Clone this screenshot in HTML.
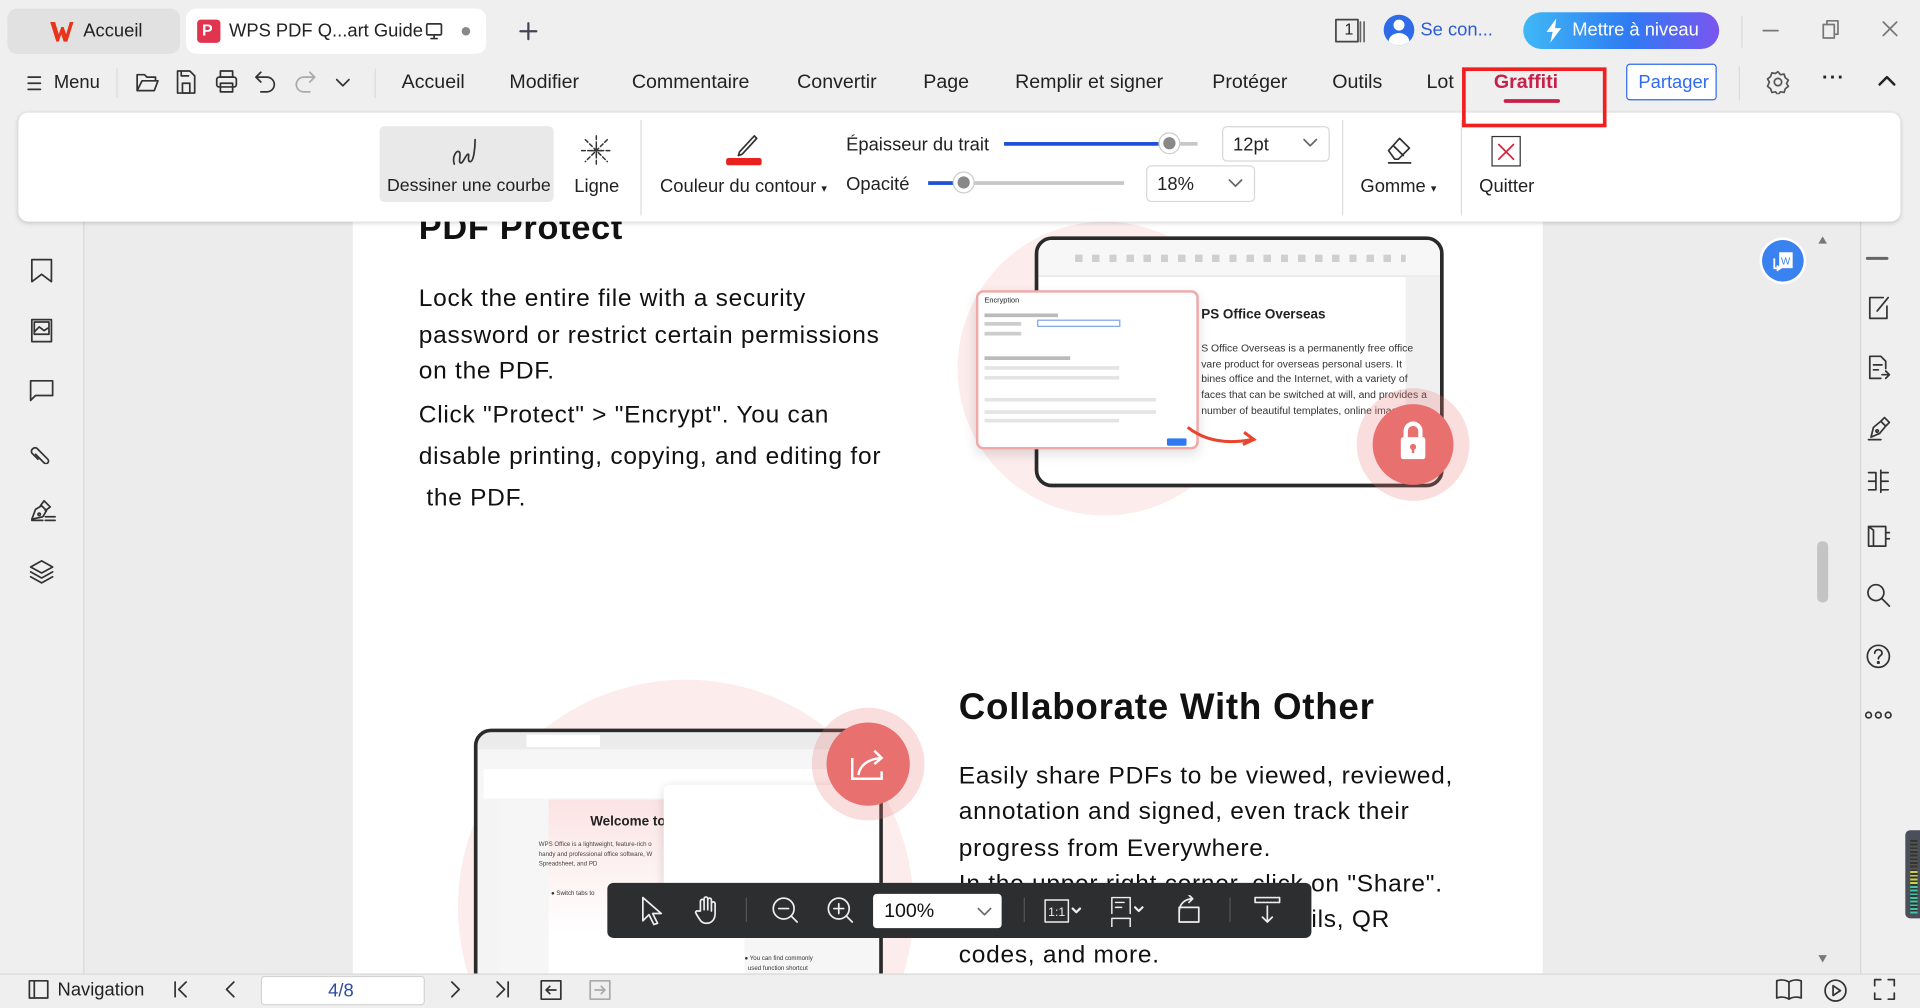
<!DOCTYPE html>
<html><head><meta charset="utf-8">
<style>
*{box-sizing:border-box;margin:0;padding:0}
html,body{width:1920px;height:1008px;overflow:hidden;background:#efefef}
#s{position:absolute;left:0;top:0;width:1568px;height:823px;transform:scale(1.22449);transform-origin:0 0;background:#efefef;font-family:"Liberation Sans",sans-serif;color:#222;overflow:hidden}
.a{position:absolute}
.t{position:absolute;font-size:15px;white-space:nowrap;line-height:1}
svg.i{position:absolute;fill:none;stroke:#333;stroke-width:1.4;stroke-linecap:round;stroke-linejoin:round}
.doc{font-family:"Liberation Sans",sans-serif;color:#111;font-size:20px;white-space:nowrap;position:absolute;letter-spacing:0.6px}
.vd{position:absolute;width:1px;background:#dcdcdc}
</style></head><body><div id="s">

<!-- title bar -->
<div class="a" style="left:6px;top:7px;width:141px;height:37px;background:#e1e1e1;border-radius:8px"></div>
<svg class="i" style="left:40px;top:17px;stroke:none" width="20" height="18" viewBox="0 0 20 18"><path d="M1 1h4l3 10 2-6h2l2 6 3-10h3l-5 16h-3l-2-6-2 6H6z" fill="#e8341c"/></svg>
<div class="t" style="left:68px;top:18px">Accueil</div>
<div class="a" style="left:152px;top:7px;width:245px;height:37px;background:#fff;border-radius:8px"></div>
<div class="a" style="left:161px;top:16px;width:19px;height:19px;background:#e0344f;border-radius:3px"></div>
<div class="t" style="left:165px;top:18px;color:#fff;font-size:13px;font-weight:bold">P</div>
<div class="t" style="left:187px;top:18px">WPS PDF Q...art Guide</div>
<svg class="i" style="left:347px;top:18px" width="15" height="15" viewBox="0 0 15 15"><rect x="1.5" y="1.5" width="12" height="9" rx="1"/><path d="M7.5 10.5v3M5 13.5h5"/></svg>
<div class="a" style="left:377px;top:22px;width:7px;height:7px;border-radius:50%;background:#888"></div>
<svg class="i" style="left:423px;top:17px;stroke:#445;stroke-width:1.8" width="17" height="17"><path d="M8.5 2v13M2 8.5h13"/></svg>

<svg class="i" style="left:1090px;top:15px" width="26" height="20"><rect x="1" y="1" width="18" height="18" stroke="#444"/><path d="M21 3v16M24 3v16" stroke="#666"/></svg>
<div class="t" style="left:1098px;top:17px;font-size:13px">1</div>
<div class="a" style="left:1130px;top:12px;width:25px;height:25px;border-radius:50%;background:#2f6be8;overflow:hidden"><div class="a" style="left:8px;top:4px;width:9px;height:9px;border-radius:50%;background:#fff"></div><div class="a" style="left:4px;top:15px;width:17px;height:14px;border-radius:50%;background:#fff"></div></div>
<div class="t" style="left:1160px;top:17px;color:#2a5bd7">Se con...</div>
<div class="a" style="left:1244px;top:10px;width:160px;height:30px;border-radius:15px;background:linear-gradient(90deg,#3fb8f6,#2f7af2 55%,#7b55f0)"></div>
<svg class="a" style="left:1262px;top:15px" width="14" height="20"><path d="M9 0L1 11h5l-2 9 9-12H8z" fill="#fff"/></svg>
<div class="t" style="left:1284px;top:17px;color:#fff">Mettre à niveau</div>
<div class="vd" style="left:1422px;top:13px;height:26px"></div>
<svg class="i" style="left:1438px;top:16px;stroke:#777" width="16" height="16"><path d="M2 9h12"/></svg>
<svg class="i" style="left:1487px;top:16px;stroke:#777" width="16" height="16"><rect x="2" y="4" width="9" height="11"/><path d="M5 4V1h9v11h-3"/></svg>
<svg class="i" style="left:1536px;top:16px;stroke:#777" width="15" height="15"><path d="M2 2l11 11M13 2L2 13"/></svg>

<!-- menu row -->
<svg class="i" style="left:22px;top:61px" width="12" height="14"><path d="M1 2h10M1 7h10M1 12h10"/></svg>
<div class="t" style="left:44px;top:60px">Menu</div>
<div class="vd" style="left:95px;top:56px;height:24px"></div>
<svg class="i" style="left:110px;top:58px" width="20" height="18"><path d="M2 3h6l2 2h7v3M2 3v13h14l3-8H6l-4 8"/></svg>
<svg class="i" style="left:143px;top:57px" width="18" height="20"><path d="M2 1h10l4 4v14H2z"/><rect x="6" y="11" width="6" height="8"/><path d="M5 1v4h6"/></svg>
<svg class="i" style="left:175px;top:57px" width="20" height="20"><rect x="5" y="1" width="10" height="5"/><rect x="2" y="6" width="16" height="8" rx="2"/><rect x="5" y="11" width="10" height="7"/></svg>
<svg class="i" style="left:207px;top:57px" width="20" height="20"><path d="M6 2L2 6l4 4M2 6h9a6 6 0 010 12H6"/></svg>
<svg class="i" style="left:239px;top:57px;stroke:#aaa" width="20" height="20"><path d="M14 2l4 4-4 4M18 6H9a6 6 0 000 12h5"/></svg>
<svg class="i" style="left:273px;top:63px" width="14" height="10"><path d="M2 2l5 5 5-5"/></svg>
<div class="vd" style="left:306px;top:56px;height:24px"></div>
<div class="t" style="left:328px;top:60px;font-size:16px">Accueil</div>
<div class="t" style="left:416px;top:60px;font-size:16px">Modifier</div>
<div class="t" style="left:516px;top:60px;font-size:16px">Commentaire</div>
<div class="t" style="left:651px;top:60px;font-size:16px">Convertir</div>
<div class="t" style="left:754px;top:60px;font-size:16px">Page</div>
<div class="t" style="left:829px;top:60px;font-size:16px">Remplir et signer</div>
<div class="t" style="left:990px;top:60px;font-size:16px">Protéger</div>
<div class="t" style="left:1088px;top:60px;font-size:16px">Outils</div>
<div class="t" style="left:1165px;top:60px;font-size:16px">Lot</div>
<div class="t" style="left:1220px;top:60px;font-size:16px;font-weight:bold;color:#c72049">Graffiti</div>
<div class="a" style="left:1228px;top:81px;width:46px;height:3px;background:#c72049;border-radius:2px"></div>
<div class="a" style="left:1328px;top:52px;width:74px;height:30px;border:1px solid #2f6bf0;border-radius:3px;background:#fff"></div>
<div class="t" style="left:1338px;top:60px;color:#2f6bf0">Partager</div>
<div class="vd" style="left:1420px;top:54px;height:28px"></div>
<svg class="i" style="left:1442px;top:57px;stroke:#555" width="20" height="20"><circle cx="10" cy="10" r="3"/><path d="M10 1.5l2 2.5 3-.5 1 3 2.5 2-1.5 2.5 1.5 2.5-2.5 2-1 3-3-.5-2 2.5-2-2.5-3 .5-1-3-2.5-2L3 10 1.5 7.5 4 5.5l1-3 3 .5z"/></svg>
<div class="t" style="left:1488px;top:56px;font-size:16px;font-weight:bold;letter-spacing:1px">···</div>
<svg class="i" style="left:1533px;top:60px;stroke:#222;stroke-width:2" width="16" height="12"><path d="M2 9l6-6 6 6"/></svg>

<div class="a" style="left:1194px;top:55px;width:118px;height:49px;border:3px solid #f02020;z-index:5"></div>

<!-- main area -->
<div class="a" style="left:0;top:181px;width:69px;height:614px;border-right:1px solid #d6d6d6"></div>
<svg class="i" style="left:24px;top:210px" width="20" height="22"><path d="M2 2h16v18l-8-6-8 6z"/></svg>
<svg class="i" style="left:24px;top:259px" width="20" height="22"><rect x="2" y="2" width="16" height="18"/><rect x="4" y="4" width="12" height="10"/><path d="M4 12l4-4 4 3 3-2"/></svg>
<svg class="i" style="left:23px;top:309px" width="22" height="20"><path d="M2 2h18v12H6l-4 4z"/></svg>
<svg class="i" style="left:23px;top:357px" width="22" height="22"><path d="M8 18l-5-5a3 3 0 014-4l9 9a2 2 0 01-3 3L6 14"/></svg>
<svg class="i" style="left:23px;top:406px" width="24" height="22"><path d="M3 18l3-8 5-3 4 4-3 5zM10 7l3-4 5 5-4 3"/><circle cx="9" cy="14" r="1"/><path d="M14 16h8M14 19h8M3 19h9"/></svg>
<svg class="i" style="left:23px;top:456px" width="22" height="22"><path d="M11 2l9 5-9 5-9-5zM2 11l9 5 9-5M2 15l9 5 9-5"/></svg>

<!-- page -->
<div class="a" style="left:288px;top:181px;width:972px;height:614px;background:#fff;overflow:hidden">
 <!-- image 2 (clipped) -->
 <div class="a" style="left:86px;top:374px;width:372px;height:372px;border-radius:50%;background:#fcecec"></div>
 <div class="a" style="left:99px;top:414px;width:334px;height:230px;border:3px solid #2a2a2a;border-radius:14px;background:#f6f6f6;overflow:hidden">
  <div class="a" style="left:0;top:0;width:330px;height:14px;background:#ebebeb"></div>
  <div class="a" style="left:40px;top:2px;width:60px;height:10px;background:#fff"></div>
  <div class="a" style="left:5px;top:30px;width:320px;height:24px;background:#fff"></div>
  <div class="a" style="left:0;top:55px;width:18px;height:180px;background:#f4f4f4"></div>
  <div class="a" style="left:58px;top:55px;width:160px;height:180px;background:linear-gradient(180deg,#fbe3e3,#fff 60%)"></div>
  <div class="t" style="left:92px;top:68px;font-size:11px;font-weight:bold">Welcome to</div>
  <div class="t" style="left:50px;top:88px;font-size:5px;line-height:8px;color:#444">WPS Office is a lightweight, feature-rich o<br>handy and professional office software, W<br>Spreadsheet, and PD</div>
  <div class="a" style="left:152px;top:43px;width:180px;height:100px;background:#fff;box-shadow:0 2px 8px rgba(0,0,0,.15);border-radius:4px"></div>
  <div class="t" style="left:218px;top:181px;font-size:5px;line-height:8px;color:#333">● You can find commonly<br>&nbsp;&nbsp;used function shortcut</div>
  <div class="t" style="left:60px;top:130px;font-size:5px;color:#333">● Switch tabs to</div>
 </div>
 <div class="a" style="left:375px;top:397px;width:92px;height:92px;border-radius:50%;background:rgba(235,120,120,.25)"></div>
 <div class="a" style="left:387px;top:409px;width:68px;height:68px;border-radius:50%;background:#e8706f"></div>
 <svg class="a" style="left:405px;top:428px" width="32" height="30"><path d="M3 10v17h24v-6M8 24q2-12 18-14M21 4l6 6-6 5" fill="none" stroke="#fff" stroke-width="2"/></svg>
</div>
<div class="a" style="left:70px;top:181px;width:218px;height:614px;background:#ececec"></div>
<div class="a" style="left:1260px;top:181px;width:259px;height:614px;background:#ececec"></div>
<div class="a" style="left:1519px;top:181px;width:1px;height:614px;background:#d6d6d6"></div>

<div class="doc" style="left:342px;top:170px;font-size:28px;font-weight:bold">PDF Protect</div>
<div class="doc" style="left:342px;top:230px;line-height:29.5px">Lock the entire file with a security<br>password or restrict certain permissions<br>on the PDF.</div>
<div class="doc" style="left:342px;top:322px;line-height:34px">Click "Protect" &gt; "Encrypt". You can<br>disable printing, copying, and editing for<br>&nbsp;the PDF.</div>

<!-- image 1 -->
<div class="a" style="left:782px;top:181px;width:240px;height:240px;border-radius:50%;background:#fcecec"></div>
<div class="a" style="left:845px;top:193px;width:334px;height:205px;border:3px solid #2a2a2a;border-radius:14px;background:#fff;overflow:hidden">
 <div class="a" style="left:0;top:0;width:330px;height:30px;background:#f7f7f7;border-bottom:1px solid #e4e4e4"></div>
 <div class="a" style="left:30px;top:12px;width:270px;height:6px;background:repeating-linear-gradient(90deg,#cfcfcf 0 6px,transparent 6px 14px)"></div>
 <div class="a" style="left:300px;top:30px;width:30px;height:170px;background:#f0f0f0"></div>
 <div class="t" style="left:133px;top:56px;font-size:11px;font-weight:bold">PS Office Overseas</div>
 <div class="t" style="left:133px;top:82px;font-size:8.5px;line-height:12.7px;color:#333">S Office Overseas is a permanently free office<br>vare product for overseas personal users. It<br>bines office and the Internet, with a variety of<br>faces that can be switched at will, and provides a<br>number of beautiful templates, online image</div>
</div>
<div class="a" style="left:797px;top:237px;width:182px;height:130px;border:2px solid #f0a8a8;border-radius:6px;background:#fff;box-shadow:0 4px 10px rgba(0,0,0,.12)">
 <div class="t" style="left:5px;top:4px;font-size:6px">Encryption</div>
 <div class="a" style="left:48px;top:22px;width:68px;height:6px;border:1px solid #7aa4ee"></div>
 <div class="a" style="left:5px;top:17px;width:60px;height:3px;background:#bbb"></div>
 <div class="a" style="left:5px;top:24px;width:30px;height:3px;background:#ccc"></div>
 <div class="a" style="left:5px;top:32px;width:30px;height:3px;background:#ccc"></div>
 <div class="a" style="left:5px;top:52px;width:70px;height:3px;background:#bbb"></div>
 <div class="a" style="left:5px;top:60px;width:110px;height:3px;background:#e4e4e4"></div>
 <div class="a" style="left:5px;top:68px;width:110px;height:3px;background:#e4e4e4"></div>
 <div class="a" style="left:5px;top:86px;width:140px;height:3px;background:#e4e4e4"></div>
 <div class="a" style="left:5px;top:96px;width:140px;height:3px;background:#e4e4e4"></div>
 <div class="a" style="left:5px;top:103px;width:110px;height:3px;background:#e4e4e4"></div>
 <div class="a" style="left:154px;top:119px;width:16px;height:6px;background:#2f7af2;border-radius:1px"></div>
</div>
<svg class="a" style="left:968px;top:345px" width="62" height="22"><path d="M2 4q20 16 52 10" fill="none" stroke="#e8452c" stroke-width="2.5"/><path d="M48 8l8 6-9 4" fill="none" stroke="#e8452c" stroke-width="2.5"/></svg>
<div class="a" style="left:1108px;top:317px;width:92px;height:92px;border-radius:50%;background:rgba(235,120,120,.25)"></div>
<div class="a" style="left:1121px;top:330px;width:66px;height:66px;border-radius:50%;background:#e8706f"></div>
<svg class="a" style="left:1140px;top:343px" width="28" height="34"><path d="M8 14V9a6 6 0 0112 0v5" fill="none" stroke="#fff" stroke-width="3.5"/><rect x="4" y="14" width="20" height="18" rx="2" fill="#fff"/><circle cx="14" cy="22" r="2.5" fill="#e8706f"/><rect x="13" y="22" width="2" height="5" fill="#e8706f"/></svg>

<div class="doc" style="left:783px;top:561px;font-size:30px;font-weight:bold">Collaborate With Other</div>
<div class="doc" style="left:783px;top:620px;line-height:29.3px">Easily share PDFs to be viewed, reviewed,<br>annotation and signed, even track their<br>progress from Everywhere.<br>In the upper right corner, click on "Share".<br>You can share it via links, emails, QR<br>codes, and more.</div>

<!-- right panel -->
<div class="a" style="left:1439px;top:196px;width:34px;height:34px;border-radius:50%;background:#3a82ef;box-shadow:0 0 0 2px #fff"></div>
<svg class="a" style="left:1446px;top:204px" width="20" height="18"><rect x="7" y="2" width="11" height="13" fill="#fff"/><path d="M3 7v8h5M5 13l3 2-3 2" fill="none" stroke="#fff" stroke-width="1.5"/><text x="8.5" y="12" font-size="8" fill="#3a82ef" font-family="Liberation Sans">W</text></svg>
<svg class="a" style="left:1484px;top:192px" width="9" height="8"><path d="M4.5 1L8 7H1z" fill="#777"/></svg>
<div class="a" style="left:1484px;top:442px;width:9px;height:50px;border-radius:4px;background:#c4c4c4"></div>
<svg class="a" style="left:1484px;top:779px" width="9" height="8"><path d="M4.5 7L8 1H1z" fill="#777"/></svg>

<svg class="i" style="left:1523px;top:203px;stroke:#666;stroke-width:2.5" width="20" height="16"><path d="M2 8h16"/></svg>
<svg class="i" style="left:1524px;top:240px" width="20" height="22"><path d="M14 3H3v17h14V10M9 14l9-11"/></svg>
<svg class="i" style="left:1524px;top:289px" width="20" height="22"><path d="M3 2h9l4 4v6M3 2v18h9M6 9h7M6 13h4M13 17h6M16 14l3 3-3 3"/></svg>
<svg class="i" style="left:1524px;top:339px" width="20" height="22"><path d="M4 18l2-8 6-5 4 4-5 6zM12 5l3-3 4 4-3 3"/><circle cx="9" cy="13" r="1"/><path d="M2 20h10"/></svg>
<svg class="i" style="left:1523px;top:382px" width="22" height="22"><path d="M3 4h6M3 11h6M3 18h6M9 4v14M13 2v18M13 4h6M13 11h6M13 18h6"/></svg>
<svg class="i" style="left:1523px;top:427px" width="22" height="22"><path d="M3 3h14v16H3zM3 3l4 3v13M17 8h3M17 13h3"/></svg>
<svg class="i" style="left:1523px;top:475px" width="22" height="22"><circle cx="9" cy="9" r="6.5"/><path d="M14 14l6 6"/></svg>
<svg class="i" style="left:1523px;top:525px" width="22" height="22"><circle cx="11" cy="11" r="9"/><path d="M8 8.5a3 3 0 116 0c0 2-3 2-3 4.5"/><circle cx="11" cy="16" r=".6" fill="#333"/></svg>
<svg class="i" style="left:1522px;top:578px" width="24" height="12"><circle cx="4" cy="6" r="2.3"/><circle cx="12" cy="6" r="2.3"/><circle cx="20" cy="6" r="2.3"/></svg>
<div class="a" style="left:1556px;top:678px;width:12px;height:72px;border-radius:4px 0 0 4px;background:#4a4f5a"><div class="a" style="left:4px;top:8px;width:6px;height:60px;background:repeating-linear-gradient(180deg,#333 0 1.5px,transparent 1.5px 3px),linear-gradient(180deg,#555 0 40%,#c9d24a 40% 60%,#3fc7a8 60%)"></div></div>

<!-- ribbon -->
<div class="a" style="left:15px;top:92px;width:1537px;height:89px;background:#fff;border-radius:8px;box-shadow:0 1px 4px rgba(0,0,0,.18)"></div>
<div class="a" style="left:310px;top:103px;width:142px;height:62px;background:#e9e9e9;border-radius:4px"></div>
<svg class="i" style="left:367px;top:110px" width="28" height="28"><path d="M4 24c-2-6 2-12 4-10s-1 8 1 9 4-6 6-7-1 6 2 6 4-12 4-18"/></svg>
<div class="t" style="left:316px;top:145px;font-size:14.5px">Dessiner une courbe</div>
<svg class="i" style="left:474px;top:110px;stroke-width:1.2" width="26" height="26"><path d="M13 1v24M1 13h24M4 4l18 18M22 4L4 22" stroke-dasharray="3 2"/><path d="M9 13h8M13 9v8"/></svg>
<div class="t" style="left:469px;top:145px">Ligne</div>
<div class="vd" style="left:523px;top:98px;height:78px"></div>
<svg class="i" style="left:597px;top:108px" width="24" height="24"><path d="M19 3l2 2-12 13-3 1 1-3z"/></svg>
<div class="a" style="left:593px;top:129px;width:29px;height:6px;background:#e8201e;border-radius:2px"></div>
<div class="t" style="left:539px;top:145px">Couleur du contour <span style="font-size:9px">▾</span></div>
<div class="t" style="left:691px;top:111px">Épaisseur du trait</div>
<div class="a" style="left:820px;top:116px;width:158px;height:3px;background:#c6c6c6"></div>
<div class="a" style="left:820px;top:116px;width:135px;height:3px;background:#1e4fd8"></div>
<div class="a" style="left:946px;top:108px;width:18px;height:18px;border-radius:50%;background:#fff;border:1px solid #ccc"><div class="a" style="left:3px;top:3px;width:10px;height:10px;border-radius:50%;background:#888"></div></div>
<div class="a" style="left:998px;top:103px;width:88px;height:29px;border:1px solid #d8d8d8;border-radius:4px"></div>
<div class="t" style="left:1007px;top:111px">12pt</div>
<svg class="i" style="left:1064px;top:112px;stroke:#666" width="12" height="9"><path d="M1 2l5 5 5-5"/></svg>
<div class="t" style="left:691px;top:143px">Opacité</div>
<div class="a" style="left:758px;top:148px;width:160px;height:3px;background:#c6c6c6"></div>
<div class="a" style="left:758px;top:148px;width:29px;height:3px;background:#1e4fd8"></div>
<div class="a" style="left:778px;top:140px;width:18px;height:18px;border-radius:50%;background:#fff;border:1px solid #ccc"><div class="a" style="left:3px;top:3px;width:10px;height:10px;border-radius:50%;background:#888"></div></div>
<div class="a" style="left:936px;top:135px;width:89px;height:30px;border:1px solid #d8d8d8;border-radius:4px"></div>
<div class="t" style="left:945px;top:143px">18%</div>
<svg class="i" style="left:1003px;top:145px;stroke:#666" width="12" height="9"><path d="M1 2l5 5 5-5"/></svg>
<div class="vd" style="left:1096px;top:98px;height:78px"></div>
<svg class="i" style="left:1130px;top:109px" width="26" height="26"><path d="M4 14l9-10 8 8-9 9h-3zM8 10l8 8M4 24h18"/></svg>
<div class="t" style="left:1111px;top:145px">Gomme <span style="font-size:9px">▾</span></div>
<div class="vd" style="left:1193px;top:98px;height:78px"></div>
<div class="a" style="left:1218px;top:111px;width:24px;height:25px;border:1.5px solid #333"></div>
<svg class="i" style="left:1221px;top:115px;stroke:#d6203c" width="18" height="18"><path d="M3 3l12 12M15 3L3 15"/></svg>
<div class="t" style="left:1208px;top:145px">Quitter</div>

<!-- floating toolbar -->
<div class="a" style="left:496px;top:721px;width:575px;height:45px;background:#2d2e30;border-radius:5px"></div>
<svg class="i" style="left:521px;top:731px;stroke:#eee" width="22" height="26"><path d="M4 2v19l5-5 4 8 3-1-4-8h7z"/></svg>
<svg class="i" style="left:566px;top:731px;stroke:#eee" width="22" height="26"><path d="M6 13V5a1.5 1.5 0 013 0v7V3a1.5 1.5 0 013 0v9V4a1.5 1.5 0 013 0v9V7a1.5 1.5 0 013 0v8c0 5-3 8-7 8s-5-2-8-7l-1-2a1.5 1.5 0 012-1z"/></svg>
<div class="a" style="left:609px;top:733px;width:1px;height:20px;background:#555"></div>
<svg class="i" style="left:629px;top:731px;stroke:#eee" width="24" height="24"><circle cx="11" cy="11" r="8.5"/><path d="M17 17l5 5M7 11h8"/></svg>
<svg class="i" style="left:674px;top:731px;stroke:#eee" width="24" height="24"><circle cx="11" cy="11" r="8.5"/><path d="M17 17l5 5M7 11h8M11 7v8"/></svg>
<div class="a" style="left:713px;top:730px;width:105px;height:28px;background:#fff;border-radius:3px"></div>
<div class="t" style="left:722px;top:737px;font-size:16px;color:#111">100%</div>
<svg class="i" style="left:798px;top:740px;stroke:#666" width="12" height="9"><path d="M1 2l5 5 5-5"/></svg>
<div class="a" style="left:836px;top:733px;width:1px;height:20px;background:#555"></div>
<svg class="i" style="left:852px;top:733px;stroke:#eee;stroke-width:1.2" width="32" height="22"><rect x="1.5" y="2" width="19" height="18"/><text x="4" y="15" fill="#eee" stroke="none" font-size="10" font-family="Liberation Sans">1:1</text><path d="M24 9l3 3 3-3" stroke-width="1.8"/></svg>
<svg class="i" style="left:906px;top:731px;stroke:#eee;stroke-width:1.2" width="32" height="26"><path d="M2 15V2h15v13M5 6h7M5 10h5M2 26v-7h15v7"/><path d="M21 10l3 3 3-3" stroke-width="1.8"/></svg>
<svg class="i" style="left:959px;top:731px;stroke:#eee" width="24" height="24"><rect x="4" y="10" width="16" height="12"/><path d="M4 14c0-7 5-11 11-11M12 0l3 3-3 3"/></svg>
<div class="a" style="left:1004px;top:733px;width:1px;height:20px;background:#555"></div>
<svg class="i" style="left:1023px;top:731px;stroke:#eee" width="24" height="24"><rect x="2" y="2" width="20" height="4" stroke-dasharray="2 1"/><path d="M12 9v13M8 18l4 4 4-4"/></svg>

<!-- status bar -->
<div class="a" style="left:0;top:795px;width:1568px;height:28px;background:#efefef;border-top:1px solid #d8d8d8"></div>
<svg class="i" style="left:23px;top:800px" width="18" height="16"><rect x="1" y="1" width="15" height="14"/><path d="M5 1v14"/></svg>
<div class="t" style="left:47px;top:801px">Navigation</div>
<svg class="i" style="left:141px;top:801px" width="14" height="14"><path d="M2 1v12M11 1L5 7l6 6"/></svg>
<svg class="i" style="left:181px;top:801px" width="14" height="14"><path d="M10 1L4 7l6 6"/></svg>
<div class="a" style="left:213px;top:797px;width:134px;height:24px;background:#fff;border:1px solid #d4d4d4;border-radius:3px"></div>
<div class="t" style="left:268px;top:802px;color:#2a4da0">4/8</div>
<svg class="i" style="left:365px;top:801px" width="14" height="14"><path d="M4 1l6 6-6 6"/></svg>
<svg class="i" style="left:403px;top:801px" width="14" height="14"><path d="M3 1l6 6-6 6M12 1v12"/></svg>
<svg class="i" style="left:441px;top:800px" width="18" height="17"><rect x="1" y="1" width="16" height="15"/><path d="M13 8.5H5M8 5.5l-3 3 3 3"/></svg>
<svg class="i" style="left:481px;top:800px;stroke:#aaa" width="18" height="17"><rect x="1" y="1" width="16" height="15"/><path d="M5 8.5h8M10 5.5l3 3-3 3"/></svg>
<svg class="i" style="left:1450px;top:799px" width="22" height="18"><path d="M11 3v14M11 3C8 1 4 1 1 2v14c3-1 7-1 10 1 3-2 7-2 10-1V2c-3-1-7-1-10 1"/></svg>
<svg class="i" style="left:1489px;top:799px" width="20" height="20"><circle cx="10" cy="10" r="8.5"/><path d="M8 6v8l6-4z"/></svg>
<svg class="i" style="left:1530px;top:799px" width="18" height="18"><path d="M1 6V1h5M12 1h5v5M17 12v5h-5M6 17H1v-5"/></svg>

</div></body></html>
